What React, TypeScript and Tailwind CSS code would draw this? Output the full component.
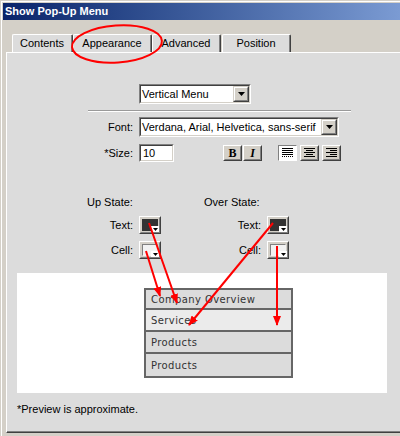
import React from "react";

function DownTri({ w = 7, h = 4 }: { w?: number; h?: number }) {
  return (
    <svg width={w} height={h} viewBox={`0 0 ${w} ${h}`}>
      <path d={`M0 0 L${w} 0 L${w / 2} ${h} Z`} fill="#000" />
    </svg>
  );
}

function Select({ text, width }: { text: string; width: string }) {
  return (
    <div className={`${width} h-[20px] border border-t-[#808080] border-l-[#808080] border-r-white border-b-white`}>
      <div className="w-full h-full border border-t-[#404040] border-l-[#404040] border-r-[#d4d0c8] border-b-[#d4d0c8] bg-white flex items-center">
        <span className="flex-1 pl-[1px] leading-[14px] whitespace-nowrap overflow-hidden">{text}</span>
        <div className="w-[16px] h-[16px] bg-[#d4d0c8] border border-t-[#d4d0c8] border-l-[#d4d0c8] border-r-[#404040] border-b-[#404040]">
          <div className="w-full h-full border border-t-white border-l-white border-r-[#808080] border-b-[#808080] flex items-center justify-center">
            <DownTri />
          </div>
        </div>
      </div>
    </div>
  );
}

function RaisedBtn({ children, pressed = false }: { children: React.ReactNode; pressed?: boolean }) {
  return pressed ? (
    <div className="w-[19px] h-[16px] border border-t-[#808080] border-l-[#808080] border-r-white border-b-white bg-white flex items-center justify-center">
      {children}
    </div>
  ) : (
    <div className="w-[19px] h-[16px] border border-t-white border-l-white border-r-[#404040] border-b-[#404040] bg-[#d4d0c8]">
      <div className="w-full h-full border border-transparent border-r-[#808080] border-b-[#808080] flex items-center justify-center">
        {children}
      </div>
    </div>
  );
}

function AlignIcon({ kind }: { kind: "justify" | "center" | "right" }) {
  const lines =
    kind === "justify"
      ? [
          [0, 11],
          [0, 11],
          [0, 11],
          [0, 11],
          [0, 11],
        ]
      : kind === "center"
      ? [
          [0, 11],
          [2, 9],
          [0, 11],
          [2, 9],
          [0, 11],
        ]
      : [
          [0, 11],
          [4, 11],
          [0, 11],
          [4, 11],
          [0, 11],
        ];
  return (
    <svg width="11" height="10" viewBox="0 0 11 10">
      {lines.map(([a, b], i) => (
        <rect key={i} x={a} y={i * 2} width={b - a} height="1" fill="#000" />
      ))}
      {kind === "justify" &&
        [1, 3, 5, 7, 9].map((x) => <rect key={"d" + x} x={x} y={8} width="1" height="1" fill="#fff" />)}
    </svg>
  );
}

function Swatch({ dark }: { dark: boolean }) {
  return (
    <div className="relative w-[22px] h-[18px] border border-t-white border-l-white border-r-[#404040] border-b-[#404040] bg-[#d4d0c8]">
      <div className="w-full h-full border border-transparent border-r-[#808080] border-b-[#808080] p-[1px]">
        {dark ? (
          <div className="w-full h-full bg-[#333333]" />
        ) : (
          <div className="w-full h-full bg-[#f2f2f2] border border-t-[#808080] border-l-[#808080] border-r-transparent border-b-transparent" />
        )}
      </div>
      <div className="absolute right-[1px] bottom-[1px] w-[8px] h-[6px] bg-white flex items-center justify-center">
        <DownTri w={5} h={3} />
      </div>
    </div>
  );
}

function Tab({ label, width }: { label: string; width: string }) {
  return (
    <div className={`${width} h-[18px] bg-[#dcdcdc] border-t border-l border-white border-r border-r-[#404040] rounded-t-[2px]`}>
      <div className="w-full h-full border-r border-[#808080] flex items-center justify-center leading-[13px]">
        {label}
      </div>
    </div>
  );
}

export default function App() {
  return (
    <div className="relative w-[400px] h-[436px] overflow-hidden bg-[#d4d0c8] text-black text-[11px] font-['Liberation_Sans',Arial,sans-serif]">
      <div className="pl-px pt-px h-full">
        <div className="border-l border-t border-white pl-px pt-px h-full flex flex-col">
          {/* title bar */}
          <div className="h-[17px] bg-gradient-to-r from-[#0a246a] to-[#7b9bd3] text-white font-bold pl-[2px] flex items-center leading-[13px] whitespace-nowrap">
            Show Pop-Up Menu
          </div>

          {/* tabs */}
          <div className="flex mt-[14px] ml-[9px] h-[18px]">
            <Tab label="Contents" width="w-[61px]" />
            <Tab label="Appearance" width="w-[79px]" />
            <Tab label="Advanced" width="w-[69px]" />
            <div className="w-[1px]" />
            <Tab label="Position" width="w-[69px]" />
          </div>

          {/* panel */}
          <div className="ml-[3px] h-[381px] border-t border-l border-white border-b border-b-[#404040] bg-[#dcdcdc]">
            <div className="h-full border-b border-[#808080] flex flex-col">
              <div className="mt-[31px] ml-[132px]">
                <Select text="Vertical Menu" width="w-[112px]" />
              </div>

              <div className="mt-[6px] ml-[81px] w-[263px]">
                <div className="h-px bg-[#9a9a9a]" />
                <div className="h-px bg-white" />
              </div>

              <div className="mt-[5px] flex items-center h-[20px]">
                <div className="w-[126px] text-right leading-[13px]">Font:</div>
                <div className="ml-[6px]">
                  <Select text="Verdana, Arial, Helvetica, sans-serif" width="w-[200px]" />
                </div>
              </div>

              <div className="mt-[7px] flex items-center h-[18px]">
                <div className="w-[126px] text-right leading-[13px]">*Size:</div>
                <div className="ml-[6px] w-[35px] h-[18px] border border-t-[#808080] border-l-[#808080] border-r-white border-b-white">
                  <div className="w-full h-full border border-t-[#404040] border-l-[#404040] border-r-[#d4d0c8] border-b-[#d4d0c8] bg-white flex items-center pl-[2px] leading-[13px]">
                    10
                  </div>
                </div>
                <div className="ml-[49px] flex gap-[1px]">
                  <RaisedBtn>
                    <span className="font-['Liberation_Serif',serif] font-bold text-[12px] leading-none">B</span>
                  </RaisedBtn>
                  <RaisedBtn>
                    <span className="font-['Liberation_Serif',serif] font-bold italic text-[12px] leading-none">I</span>
                  </RaisedBtn>
                </div>
                <div className="ml-[16px] flex gap-[3px]">
                  <RaisedBtn pressed>
                    <AlignIcon kind="justify" />
                  </RaisedBtn>
                  <RaisedBtn>
                    <AlignIcon kind="center" />
                  </RaisedBtn>
                  <RaisedBtn>
                    <AlignIcon kind="right" />
                  </RaisedBtn>
                </div>
              </div>

              {/* states */}
              <div className="mt-[33px] flex">
                <div className="ml-[80px] flex flex-col">
                  <div className="h-[14px] leading-[14px]">Up State:</div>
                  <div className="mt-[7px] flex items-center h-[18px]">
                    <div className="w-[46px] text-right leading-[13px]">Text:</div>
                    <div className="ml-[6px]">
                      <Swatch dark />
                    </div>
                  </div>
                  <div className="mt-[7px] flex items-center h-[18px]">
                    <div className="w-[46px] text-right leading-[13px]">Cell:</div>
                    <div className="ml-[6px]">
                      <Swatch dark={false} />
                    </div>
                  </div>
                </div>
                <div className="ml-[43px] flex flex-col">
                  <div className="h-[14px] leading-[14px]">Over State:</div>
                  <div className="mt-[7px] flex items-center h-[18px]">
                    <div className="w-[57px] text-right leading-[13px]">Text:</div>
                    <div className="ml-[6px]">
                      <Swatch dark />
                    </div>
                  </div>
                  <div className="mt-[7px] flex items-center h-[18px]">
                    <div className="w-[57px] text-right leading-[13px]">Cell:</div>
                    <div className="ml-[6px]">
                      <Swatch dark={false} />
                    </div>
                  </div>
                </div>
              </div>

              {/* preview */}
              <div className="mt-[14px] ml-[10px] w-[370px] h-[120px] bg-white pt-[15px] pl-[127px]">
                <div className="w-[149px] border-2 border-[#666666] flex flex-col divide-y-2 divide-[#666666] font-['DejaVu_Sans',Verdana,sans-serif] text-[10px] text-[#333333] tracking-[0.4px]">
                  <div className="h-[20px] bg-[#dcdcdc] flex items-center pl-[5px] whitespace-nowrap">Company Overview</div>
                  <div className="h-[22px] bg-[#ebebeb] flex items-center pl-[5px]">Services</div>
                  <div className="h-[22px] bg-[#dcdcdc] flex items-center pl-[5px]">Products</div>
                  <div className="h-[22px] bg-[#dcdcdc] flex items-center pl-[5px]">Products</div>
                </div>
              </div>

              <div className="mt-[9px] ml-[10px] leading-[14px]">*Preview is approximate.</div>
            </div>
          </div>
        </div>
      </div>

      {/* annotations */}
      <svg className="absolute left-0 top-0 pointer-events-none" width="400" height="436" viewBox="0 0 400 436">
        <defs>
          <marker id="ah" markerWidth="10" markerHeight="8" refX="9" refY="4" orient="auto" markerUnits="userSpaceOnUse">
            <path d="M0 0 L10 4 L0 8 Z" fill="#ff0000" />
          </marker>
        </defs>
        <ellipse cx="117" cy="44" rx="45" ry="18.5" fill="none" stroke="#ff0000" strokeWidth="2" transform="rotate(-4 117 44)" />
        <line x1="149" y1="223" x2="177" y2="303" stroke="#ff0000" strokeWidth="2" markerEnd="url(#ah)" />
        <line x1="146" y1="251" x2="160" y2="296" stroke="#ff0000" strokeWidth="2" markerEnd="url(#ah)" />
        <line x1="273" y1="223" x2="189" y2="325" stroke="#ff0000" strokeWidth="2" markerEnd="url(#ah)" />
        <line x1="277" y1="246" x2="277" y2="325" stroke="#ff0000" strokeWidth="2" markerEnd="url(#ah)" />
      </svg>
    </div>
  );
}
